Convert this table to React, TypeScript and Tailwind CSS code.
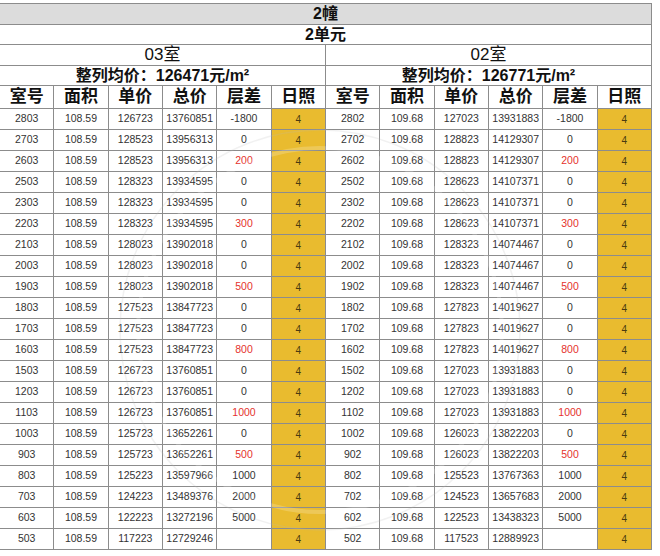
import React from 'react';

type Row = [string, string, string, string, string];

// 03室
const left: Row[] = [
  ['2803', '108.59', '126723', '13760851', '-1800'],
  ['2703', '108.59', '128523', '13956313', '0'],
  ['2603', '108.59', '128523', '13956313', '200'],
  ['2503', '108.59', '128323', '13934595', '0'],
  ['2303', '108.59', '128323', '13934595', '0'],
  ['2203', '108.59', '128323', '13934595', '300'],
  ['2103', '108.59', '128023', '13902018', '0'],
  ['2003', '108.59', '128023', '13902018', '0'],
  ['1903', '108.59', '128023', '13902018', '500'],
  ['1803', '108.59', '127523', '13847723', '0'],
  ['1703', '108.59', '127523', '13847723', '0'],
  ['1603', '108.59', '127523', '13847723', '800'],
  ['1503', '108.59', '126723', '13760851', '0'],
  ['1203', '108.59', '126723', '13760851', '0'],
  ['1103', '108.59', '126723', '13760851', '1000'],
  ['1003', '108.59', '125723', '13652261', '0'],
  ['903', '108.59', '125723', '13652261', '500'],
  ['803', '108.59', '125223', '13597966', '1000'],
  ['703', '108.59', '124223', '13489376', '2000'],
  ['603', '108.59', '122223', '13272196', '5000'],
  ['503', '108.59', '117223', '12729246', ''],
];

// 02室
const right: Row[] = [
  ['2802', '109.68', '127023', '13931883', '-1800'],
  ['2702', '109.68', '128823', '14129307', '0'],
  ['2602', '109.68', '128823', '14129307', '200'],
  ['2502', '109.68', '128623', '14107371', '0'],
  ['2302', '109.68', '128623', '14107371', '0'],
  ['2202', '109.68', '128623', '14107371', '300'],
  ['2102', '109.68', '128323', '14074467', '0'],
  ['2002', '109.68', '128323', '14074467', '0'],
  ['1902', '109.68', '128323', '14074467', '500'],
  ['1802', '109.68', '127823', '14019627', '0'],
  ['1702', '109.68', '127823', '14019627', '0'],
  ['1602', '109.68', '127823', '14019627', '800'],
  ['1502', '109.68', '127023', '13931883', '0'],
  ['1202', '109.68', '127023', '13931883', '0'],
  ['1102', '109.68', '127023', '13931883', '1000'],
  ['1002', '109.68', '126023', '13822203', '0'],
  ['902', '109.68', '126023', '13822203', '500'],
  ['802', '109.68', '125523', '13767363', '1000'],
  ['702', '109.68', '124523', '13657683', '2000'],
  ['602', '109.68', '122523', '13438323', '5000'],
  ['502', '109.68', '117523', '12889923', ''],
];

const heads = ['室号', '面积', '单价', '总价', '层差', '日照'];
const red = new Set(['200', '300', '500', '800']);

const isRed = (r: Row, i: number) => red.has(r[4]) || (r[4] === '1000' && i === 14);

const Cells: React.FC<{ r: Row; i: number }> = ({ r, i }) => (
  <>
    {r.map((v, k) => (
      <div
        key={k}
        className={`h-[21px] flex items-center justify-center border-r border-b border-[#8c8c8c] text-[10.5px] ${
          k === 4 && isRed(r, i) ? 'text-[#e5322d]' : 'text-[#333]'
        }`}
      >
        {v}
      </div>
    ))}
    <div className="h-[21px] flex items-center justify-center border-r border-b border-[#8c8c8c] bg-[#e9bb2f] text-[10px] text-[#4a3a10]">
      4
    </div>
  </>
);

export default function App() {
  return (
    <div
      className="w-[660px] h-[556px] bg-white pt-[3px] overflow-hidden relative"
      style={{ fontFamily: '"Liberation Sans", "Noto Sans CJK SC", sans-serif' }}
    >
      <div className="w-[652px] text-[#111]">
        <div className="h-[22px] flex items-center justify-center bg-[#dcdcdc] border-t border-b border-r border-[#8c8c8c] text-[16px] font-bold">
          2幢
        </div>
        <div className="h-[20px] flex items-center justify-center border-b border-r border-[#8c8c8c] text-[16px] font-bold">
          2单元
        </div>
        <div className="grid grid-cols-2">
          {[
            ['03室', '126471'],
            ['02室', '126771'],
          ].map(([room, avg]) => (
            <div key={room} className="border-r border-[#8c8c8c]">
              <div className="h-[21px] flex items-center justify-center border-b border-[#8c8c8c] text-[17px]">
                {room}
              </div>
              <div className="h-[20px] flex items-center justify-center border-b border-[#8c8c8c] text-[16px] font-bold">
                整列均价：{avg}元/m²
              </div>
            </div>
          ))}
        </div>
        <div className="grid grid-cols-12">
          {[...heads, ...heads].map((h, k) => (
            <div
              key={k}
              className="h-[23px] flex items-center justify-center border-r border-b border-[#8c8c8c] text-[17px] font-bold"
            >
              {h}
            </div>
          ))}
          {left.map((r, i) => (
            <React.Fragment key={i}>
              <Cells r={r} i={i} />
              <Cells r={right[i]} i={i} />
            </React.Fragment>
          ))}
        </div>
      </div>
      {/* faint watermark */}
      <svg className="absolute left-0 top-0 pointer-events-none" width="660" height="556">
        <circle cx="320" cy="330" r="200" fill="none" stroke="#bbb" strokeOpacity="0.2" strokeWidth="1.5" />
        <circle cx="320" cy="330" r="182" fill="none" stroke="#fff" strokeOpacity="0.2" strokeWidth="4" />
      </svg>
    </div>
  );
}
